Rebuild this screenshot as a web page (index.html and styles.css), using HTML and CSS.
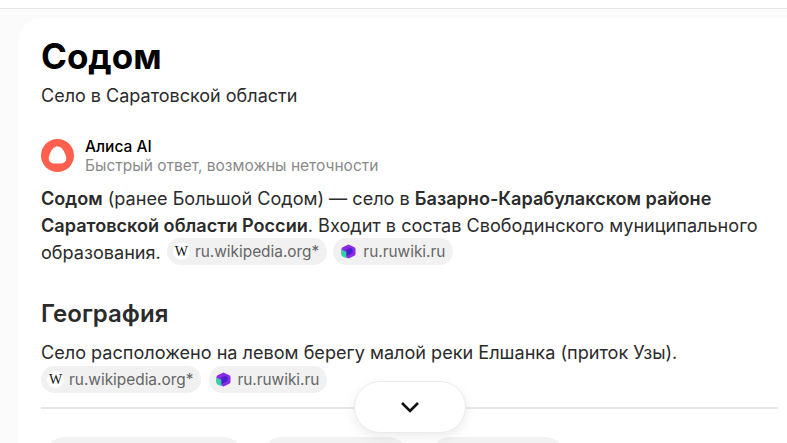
FILE: index.html
```html
<!DOCTYPE html>
<html lang="ru">
<head>
<meta charset="utf-8">
<title>Содом</title>
<link rel="stylesheet" href="styles.css">
</head>
<body>
<div class="page">
  <div class="topline"></div>
  <main class="card">
    <h1 class="title">Содом</h1>
    <p class="subtitle">Село в Саратовской области</p>
    <div class="alice">
      <svg class="alice-icon" width="33" height="33" viewBox="0 0 33 33"><circle cx="16.5" cy="16.5" r="16.5" fill="#ff5f4d"/><path d="M16.5 7.500c-3.400 0-5.300 2.500-6.700 5.400-1 2.100-2.100 4.300-2.100 6.300 0 3.700 3 5.300 5.900 5.300h5.800c2.900 0 5.900-1.600 5.900-5.300 0-2-1.100-4.200-2.100-6.300-1.400-2.900-3.300-5.400-6.700-5.400z" fill="#fff"/></svg>
      <div class="alice-text">
        <div class="alice-name">Алиса AI</div>
        <div class="alice-note">Быстрый ответ, возможны неточности</div>
      </div>
    </div>
    <p class="answer"><b>Содом</b> (ранее Большой Содом) — село в <b>Базарно-Карабулакском районе Саратовской области России</b>. Входит в состав Свободинского муниципального образования. <span class="chip"><span class="wiki">W</span>ru.wikipedia.org*</span> <span class="chip chip-wide"><svg class="ruwiki" width="17" height="17" viewBox="0 0 17 17"><path d="M8.500 1.500l5.800 2.800c.8.400 1.200 1.100 1.200 2v4.400c0 .9-.4 1.600-1.200 2l-5.800 2.800-5.800-2.800c-.8-.4-1.200-1.100-1.200-2V6.300c0-.9.400-1.600 1.200-2z" fill="#8a2be8"/><path d="M1.500 6.500l5 2.500v6.300l-3.800-1.800c-.8-.4-1.200-1.100-1.200-2z" fill="#2ed3a6"/><path d="M6.500 6l4.500-1 1.500 1.500V10l-6 3z" fill="#4a1fd0"/></svg>ru.ruwiki.ru</span></p>
    <h2 class="heading">География</h2>
    <p class="geo">Село расположено на левом берегу малой реки Елшанка (приток Узы).</p>
    <div class="chips">
      <span class="chip"><span class="wiki">W</span>ru.wikipedia.org*</span>
      <span class="chip"><svg class="ruwiki" width="17" height="17" viewBox="0 0 17 17"><path d="M8.500 1.500l5.800 2.800c.8.400 1.200 1.100 1.200 2v4.400c0 .9-.4 1.600-1.200 2l-5.800 2.800-5.800-2.800c-.8-.4-1.200-1.100-1.200-2V6.300c0-.9.400-1.600 1.200-2z" fill="#8a2be8"/><path d="M1.500 6.500l5 2.500v6.300l-3.800-1.800c-.8-.4-1.200-1.100-1.200-2z" fill="#2ed3a6"/><path d="M6.500 6l4.500-1 1.500 1.500V10l-6 3z" fill="#4a1fd0"/></svg>ru.ruwiki.ru</span>
    </div>
    <hr class="rule">
    <div class="tabs">
      <span class="tab tab-a"></span>
      <span class="tab tab-b"></span>
      <span class="tab tab-c"></span>
    </div>
  </main>
  <button class="more" aria-label="Ещё"><svg width="20" height="12" viewBox="0 0 20 12"><path d="M2 2l8 8 8-8" fill="none" stroke="#111" stroke-width="2.600"/></svg></button>
</div>
</body>
</html>
```
FILE: styles.css
```css
html, body {
  margin: 0;
  height: 443px;
  overflow: hidden;
  background: #fff;
}
.page {
  position: relative;
  height: 443px;
  overflow: hidden;
  background: #fbfbfb;
  font-family: Inter, "Noto Sans", sans-serif;
  color: #2b2b2b;
}
.topline {
  height: 9px;
  background: #fff;
  border-bottom: 1px solid #e6e6e6;
  box-sizing: border-box;
}
.card {
  margin: 9px 0 0 18px;
  padding: 16px 9px 0 23px;
  height: 460px;
  background: #fff;
  border-radius: 24px 0 0 0;
  box-sizing: border-box;
}
.title {
  margin: 0;
  font-size: 35px;
  line-height: 44px;
  font-weight: 700;
  color: #000;
}
.subtitle {
  margin: 6px 0 0;
  font-size: 18px;
  line-height: 24px;
}
.alice {
  display: flex;
  align-items: center;
  gap: 11px;
  margin-top: 28px;
}
.alice-text {
  display: flex;
  flex-direction: column;
  padding-top: 1px;
}
.alice-name {
  font-size: 15.500px;
  line-height: 19px;
  font-weight: 500;
  color: #000;
}
.alice-note {
  font-size: 15.500px;
  line-height: 19px;
  color: #8a8a8a;
}
.answer {
  margin: 10px 0 0;
  font-size: 18.100px;
  line-height: 27px;
}
.answer b { font-weight: 600; }
.answer .chip {
  margin: -1px 0 0 1px;
  vertical-align: top;
}
.answer .chip-wide {
  padding-left: 7px;
  gap: 6px;
}
.chip {
  display: inline-flex;
  align-items: center;
  height: 27px;
  padding: 0 8px 0 6px;
  gap: 5px;
  border-radius: 14px;
  background: #f1f1f1;
  color: #666;
  font-size: 15.400px;
}
.wiki {
  display: flex;
  align-items: center;
  justify-content: center;
  width: 17px;
  height: 17px;
  border-radius: 50%;
  background: #fff;
  font-family: "Liberation Serif", serif;
  font-size: 14px;
  color: #111;
}
.heading {
  margin: 33px 0 0;
  font-size: 24px;
  line-height: 30px;
  font-weight: 600;
}
.geo {
  margin: 10px 0 0;
  font-size: 18.100px;
  line-height: 26px;
}
.chips {
  display: flex;
  gap: 8px;
  margin-top: 1px;
}
.rule {
  margin: 14px 0 0;
  border: 0;
  height: 2px;
  background: #e8e8e8;
}
.tabs {
  display: flex;
  margin: 28px 0 0 4px;
  gap: 19px;
}
.tab {
  height: 40px;
  border-radius: 20px;
  background: #f2f2f2;
}
.tab-a { width: 198px; }
.tab-b { width: 146px; }
.tab-c { width: 135px; margin-left: 3px; }
.more {
  position: absolute;
  left: 354px;
  top: 381px;
  width: 112px;
  height: 52px;
  padding: 0;
  display: flex;
  align-items: center;
  justify-content: center;
  border: 1px solid #ececec;
  border-radius: 26px;
  background: #fff;
  box-shadow: 0 4px 12px rgba(0, 0, 0, .08);
}
```
